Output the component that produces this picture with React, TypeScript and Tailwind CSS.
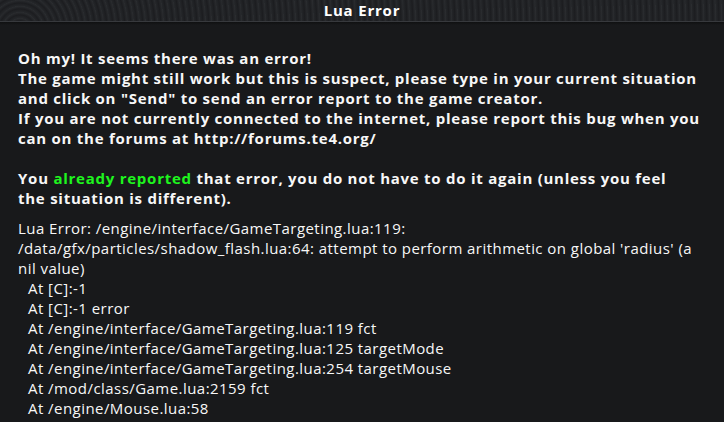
import React from 'react';

const intro = [
  'Oh my! It seems there was an error!',
  'The game might still work but this is suspect, please type in your current situation',
  'and click on "Send" to send an error report to the game creator.',
  'If you are not currently connected to the internet, please report this bug when you',
  'can on the forums at http://forums.te4.org/',
];

const trace = [
  { text: 'Lua Error: /engine/interface/GameTargeting.lua:119:', indent: false },
  { text: "/data/gfx/particles/shadow_flash.lua:64: attempt to perform arithmetic on global 'radius' (a", indent: false },
  { text: 'nil value)', indent: false },
  { text: 'At [C]:-1', indent: true },
  { text: 'At [C]:-1 error', indent: true },
  { text: 'At /engine/interface/GameTargeting.lua:119 fct', indent: true },
  { text: 'At /engine/interface/GameTargeting.lua:125 targetMode', indent: true },
  { text: 'At /engine/interface/GameTargeting.lua:254 targetMouse', indent: true },
  { text: 'At /mod/class/Game.lua:2159 fct', indent: true },
  { text: 'At /engine/Mouse.lua:58', indent: true },
];

export default function App() {
  return (
    <div className="w-[724px] h-[422px] overflow-hidden bg-[#18191b] text-[#f7f7f7]"
      style={{ fontFamily: '"Open Sans", Lato, sans-serif' }}>
      {/* ornate title bar */}
      <header className="relative h-[22px] flex items-center justify-center border-b border-[#37393d]"
        style={{
          background:
            'repeating-radial-gradient(circle at 20px 30px, #25272a 0px, #1c1d20 3px, #2a2c2f 6px), #202225',
        }}>
        <h1 className="text-[15px] font-bold leading-none text-white tracking-[0.8px]">Lua Error</h1>
        <div className="absolute left-0 right-0 -bottom-[4px] h-[3px] bg-gradient-to-b from-[#0f1011] to-transparent" />
      </header>

      <main className="pl-[18px] pt-[26px]">
        <div className="font-bold text-[15px] leading-[20px] tracking-[0.75px] whitespace-pre">
          {intro.map((l) => (
            <div key={l}>{l}</div>
          ))}
          <div>&nbsp;</div>
          <div>
            You <span className="text-[#1ef51e]">already reported</span> that error, you do not have to do it again (unless you feel
          </div>
          <div>the situation is different).</div>
        </div>

        <div className="mt-[10px] text-[15px] leading-[20px] tracking-[0.45px] whitespace-pre">
          {trace.map((t) => (
            <div key={t.text} className={t.indent ? 'pl-[10px]' : ''}>{t.text}</div>
          ))}
        </div>
      </main>
    </div>
  );
}
